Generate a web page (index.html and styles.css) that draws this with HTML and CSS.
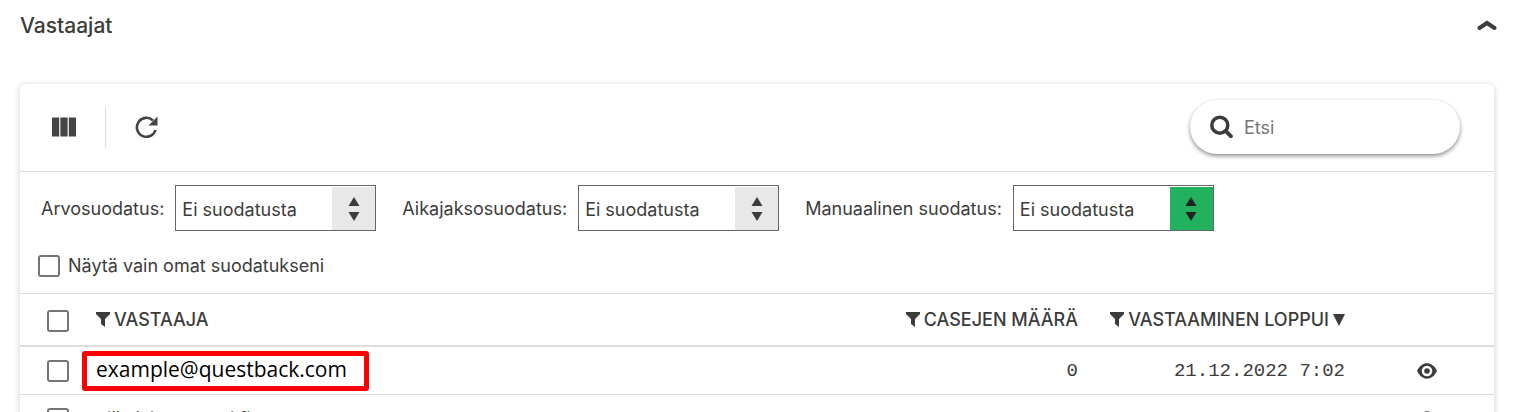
FILE: index.html
```html
<!DOCTYPE html>
<html lang="fi">
<head>
    <meta charset="UTF-8">
    <meta name="viewport" content="width=device-width, initial-scale=1.0">
    <title>Vastaajat</title>
    <link rel="stylesheet" href="styles.css">
</head>
<body>

    <header class="section-header">
        <h1>Vastaajat</h1>
        <button class="icon-button" type="button" aria-label="Sulje osio">
            <svg width="20" height="12" viewBox="0 0 20 12"><path d="M2.500 8L10 3L17.500 8" fill="none" stroke="#3c3c3b" stroke-width="4" stroke-linecap="round" stroke-linejoin="miter"/></svg>
        </button>
    </header>

    <main class="panel">
        <div class="toolbar">
            <div class="tools">
                <button class="icon-button" type="button" aria-label="Sarakkeet">
                    <svg width="26" height="20" viewBox="0 0 26 20" fill="#444"><path d="M1 0.500h7.200v19H1zM9.400 0.500h7.200v19h-7.200zM17.800 0.500h7.200v19h-7.200z"/></svg>
                </button>
                <span class="divider"></span>
                <button class="icon-button" type="button" aria-label="Päivitä">
                    <svg width="24" height="22" viewBox="0 0 24 22"><path d="M19 4.500A9.500 9.500 0 1 0 21.500 14" fill="none" stroke="#444" stroke-width="2.600"/><path d="M23.500 0.500V9.500H14.500z" fill="#444"/></svg>
                </button>
            </div>
            <label class="search">
                <svg width="24" height="24" viewBox="0 0 24 24" fill="none" stroke="#3c3c3b"><circle cx="9.800" cy="10.200" r="8" stroke-width="3.500"/><path d="M15.800 16.200L20.800 21.200" stroke-width="4" stroke-linecap="round"/></svg>
                <input type="search" placeholder="Etsi" aria-label="Etsi">
            </label>
        </div>

        <div class="filters">
            <div class="filter-row">
                <div class="filter">
                    <label for="value-filter">Arvosuodatus:</label>
                    <div class="select-box">
                        <select id="value-filter"><option>Ei suodatusta</option></select>
                        <span class="arrows"><svg width="12" height="24" viewBox="0 0 12 24"><path d="M6 0l5.500 9h-11zM6 24l5.500-9h-11z"/></svg></span>
                    </div>
                </div>
                <div class="filter">
                    <label for="time-filter">Aikajaksosuodatus:</label>
                    <div class="select-box">
                        <select id="time-filter"><option>Ei suodatusta</option></select>
                        <span class="arrows"><svg width="12" height="24" viewBox="0 0 12 24"><path d="M6 0l5.500 9h-11zM6 24l5.500-9h-11z"/></svg></span>
                    </div>
                </div>
                <div class="filter">
                    <label for="manual-filter">Manuaalinen suodatus:</label>
                    <div class="select-box">
                        <select id="manual-filter"><option>Ei suodatusta</option></select>
                        <span class="arrows green"><svg width="12" height="24" viewBox="0 0 12 24"><path d="M6 0l5.500 9h-11zM6 24l5.500-9h-11z"/></svg></span>
                    </div>
                </div>
            </div>
            <label class="own-filters"><input type="checkbox"> Näytä vain omat suodatukseni</label>
        </div>

        <table>
            <thead>
                <tr>
                    <th class="col-check"><input type="checkbox" aria-label="Valitse kaikki"></th>
                    <th class="col-name"><span class="heading"><svg width="14" height="15" viewBox="0 0 14 15"><path d="M0 0H14V2L9 7V15L5 12V7L0 2z"/></svg>VASTAAJA</span></th>
                    <th class="col-cases"><span class="heading"><svg width="14" height="15" viewBox="0 0 14 15"><path d="M0 0H14V2L9 7V15L5 12V7L0 2z"/></svg>CASEJEN MÄÄRÄ</span></th>
                    <th class="col-date"><span class="heading"><svg width="14" height="15" viewBox="0 0 14 15"><path d="M0 0H14V2L9 7V15L5 12V7L0 2z"/></svg>VASTAAMINEN LOPPUI<svg width="12" height="12" viewBox="0 0 12 12"><path d="M0 0H12L6 12z"/></svg></span></th>
                    <th class="col-view"></th>
                </tr>
            </thead>
            <tbody>
                <tr>
                    <td class="col-check"><input type="checkbox" aria-label="Valitse example@questback.com"></td>
                    <td class="col-name"><span class="highlight">example@questback.com</span></td>
                    <td class="col-cases">0</td>
                    <td class="col-date">21.12.2022 7:02</td>
                    <td class="col-view">
                        <button class="icon-button" type="button" aria-label="Näytä vastaaja">
                            <svg width="20" height="16" viewBox="0 0 20 16"><path d="M0 8C5-2.200 15-2.200 20 8C15 18.200 5 18.200 0 8z" fill="#3c3c3b"/><circle cx="10" cy="8" r="5.300" fill="#fff"/><circle cx="10" cy="8" r="2.800" fill="#3c3c3b"/></svg>
                        </button>
                    </td>
                </tr>
                <tr>
                    <td class="col-check"><input type="checkbox" aria-label="Valitse vastaaja"></td>
                    <td class="col-name"><span class="email">pilla.laine@posti.fi</span></td>
                    <td class="col-cases">0</td>
                    <td class="col-date">12.12.2022 7:00</td>
                    <td class="col-view">
                        <button class="icon-button" type="button" aria-label="Näytä vastaaja">
                            <svg width="20" height="16" viewBox="0 0 20 16"><path d="M0 8C5-2.200 15-2.200 20 8C15 18.200 5 18.200 0 8z" fill="#3c3c3b"/><circle cx="10" cy="8" r="5.300" fill="#fff"/><circle cx="10" cy="8" r="2.800" fill="#3c3c3b"/></svg>
                        </button>
                    </td>
                </tr>
            </tbody>
        </table>
    </main>

</body>
</html>
```

FILE: styles.css
```css
* {
    box-sizing: border-box;
}

body {
    font-family: Inter, "Liberation Sans", sans-serif;
    font-size: 18px;
    line-height: 22px;
    color: #3c3c3b;
    background: #fff;
    margin: 0;
    padding: 0 20px;
    height: 100vh;
    overflow: hidden;
}

.section-header {
    display: flex;
    align-items: center;
    justify-content: space-between;
    height: 48px;
    margin-bottom: 36px;
    padding-top: 4px;
}

h1 {
    font-size: 21px;
    font-weight: 500;
    line-height: 24px;
    margin: 0;
}

.icon-button {
    display: flex;
    padding: 0;
    border: none;
    background: none;
    cursor: pointer;
}

.section-header .icon-button {
    margin-right: -3px;
}

.panel {
    border-radius: 6px;
    box-shadow: 0 1px 6px rgba(0, 0, 0, 0.2);
}

.toolbar {
    display: flex;
    align-items: center;
    justify-content: space-between;
    height: 88px;
    padding: 0 34px 1px 31px;
    border-bottom: 1px solid #ddd;
}

.tools {
    display: flex;
    align-items: center;
    gap: 28px;
}

.divider {
    width: 1px;
    height: 41px;
    background: #ddd;
}

.search {
    display: flex;
    align-items: center;
    gap: 10px;
    width: 270px;
    height: 54px;
    padding: 0 20px;
    border-radius: 27px;
    box-shadow: 0 2px 4px rgba(0, 0, 0, 0.45);
}

.search input {
    flex: 1;
    min-width: 0;
    padding: 2px 0 0;
    border: none;
    outline: none;
    background: none;
    font: inherit;
}

.search input::placeholder {
    color: #757575;
}

.filters {
    padding: 13px 18px 16px;
    border-bottom: 1px solid #ddd;
}

.filter-row {
    display: flex;
    gap: 26px;
    padding-left: 3px;
    margin-bottom: 24px;
}

.filter {
    display: flex;
    align-items: center;
    gap: 11px;
}

.filter label {
    padding-top: 2px;
}

.select-box {
    display: flex;
    width: 201px;
    height: 46px;
    border: 1px solid #666;
}

.select-box select {
    flex: 1;
    min-width: 0;
    padding: 4px 6px 0;
    border: none;
    appearance: none;
    background: none;
    color: inherit;
    font: inherit;
}

.arrows {
    display: flex;
    align-items: center;
    justify-content: center;
    width: 43px;
    margin-top: 1px;
    background: #e8e8e8;
    fill: #3c3c3b;
}

.arrows.green {
    background: #22b25d;
    fill: #222;
}

.own-filters {
    display: flex;
    align-items: center;
    gap: 8px;
}

input[type="checkbox"] {
    appearance: none;
    display: block;
    width: 22px;
    height: 22px;
    margin: 0;
    border: 2px solid #757575;
    border-radius: 3px;
    background: #fff;
}

table {
    width: 100%;
    table-layout: fixed;
    border-collapse: separate;
    border-spacing: 0;
}

th, td {
    padding: 0;
    text-align: right;
}

th {
    height: 53px;
    padding-top: 2px;
    font-weight: 500;
    border-bottom: 2px solid #ddd;
}

td {
    height: 48px;
    border-bottom: 1px solid #ddd;
}

.col-check {
    width: 62px;
    padding-left: 27px;
}

.col-name {
    text-align: left;
}

th.col-name {
    padding-left: 14px;
}

.col-cases {
    width: 200px;
}

.col-date {
    width: 267px;
}

td.col-cases, td.col-date {
    font-family: "Liberation Mono", monospace;
    font-size: 19px;
}

.col-view {
    width: 149px;
    padding-left: 72px;
}

.heading {
    display: inline-flex;
    align-items: center;
    gap: 4px;
    fill: #3c3c3b;
}

.email {
    padding-left: 14px;
}

.highlight {
    display: block;
    width: fit-content;
    padding: 0 17px 4px 9px;
    border: 5px solid #f00;
    border-radius: 3px;
    color: #000;
    font-family: "Open Sans", "Noto Sans", sans-serif;
    font-size: 21px;
    line-height: 26px;
}
```
